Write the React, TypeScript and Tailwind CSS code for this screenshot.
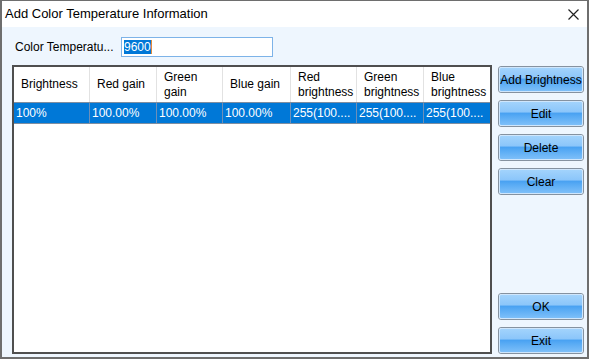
import React from 'react';

const cols = [
  { w: 'w-[76px]', head: ['Brightness'], val: '100%' },
  { w: 'w-[67px]', head: ['Red gain'], val: '100.00%' },
  { w: 'w-[66px]', head: ['Green', 'gain'], val: '100.00%' },
  { w: 'w-[68px]', head: ['Blue gain'], val: '100.00%' },
  { w: 'w-[66px]', head: ['Red', 'brightness'], val: '255(100....' },
  { w: 'w-[67px]', head: ['Green', 'brightness'], val: '255(100....' },
  { w: 'w-[66px]', head: ['Blue', 'brightness'], val: '255(100....' },
];

const Btn: React.FC<{ label: string }> = ({ label }) => (
  <button className="h-[27px] w-[86px] rounded-[3px] border border-[#8592a0] p-0 text-[12px] text-black">
    <span className="flex h-full w-full items-center justify-center rounded-[2px] border border-[#cfe6fc] bg-[linear-gradient(to_bottom,#a2d3fc_0%,#8cc6fa_42%,#4aa2f2_50%,#57aaf4_62%,#7dbff9_100%)]">
      {label}
    </span>
  </button>
);

export default function App() {
  return (
    <div className="flex h-[359px] w-[589px] flex-col border-x-2 border-t border-b-[3px] border-[#6e6e6e] font-['Liberation_Sans',Arial,sans-serif] text-black">
      {/* title bar */}
      <div className="flex h-[26px] shrink-0 items-center justify-between bg-white pl-[3px] pr-[8px]">
        <span className="text-[13px]">Add Color Temperature Information</span>
        <svg width="11" height="11" viewBox="0 0 11 11" className="mt-[1px]">
          <path d="M0.5 0.5 L10.5 10.5 M10.5 0.5 L0.5 10.5" stroke="#222" strokeWidth="1.2" />
        </svg>
      </div>

      <div className="flex flex-1 flex-col bg-[#eef6fe] pl-[10px] pr-[3px] pt-[10px] pb-[3px]">
        <div className="flex h-[20px] items-center">
          <span className="ml-[3px] w-[106px] text-[12px]">Color Temperatu...</span>
          <div className="flex h-[20px] w-[152px] items-center border border-[#7db3e8] bg-white pl-[2px] text-[12px]">
            <span className="bg-[#0078d7] leading-[14px] text-white">9600</span>
            <span className="h-[14px] w-[1px] bg-[#e08a3c]" />
          </div>
        </div>

        <div className="mt-[8px] flex flex-1 gap-[6px]">
          {/* table */}
          <div className="flex h-[289px] w-[480px] flex-col border-2 border-[#4f4f4f] bg-white">
            <div className="flex h-[35px] text-[12px] leading-[15px]">
              {cols.map((c, i) => (
                <div key={i} className={`${c.w} flex flex-col justify-center border-r border-[#e2e2e2] pl-[7px] last:border-r-0`}>
                  {c.head.map((h) => (
                    <span key={h}>{h}</span>
                  ))}
                </div>
              ))}
            </div>
            <div className="flex h-[22px] border-y border-[#7f8ea0] bg-[#0078d7] text-[12px] text-white">
              {cols.map((c, i) => (
                <div key={i} className={`${c.w} flex items-center border-r border-[#6d8fb8] pl-[2px] last:border-r-0`}>
                  {c.val}
                </div>
              ))}
            </div>
          </div>

          {/* buttons */}
          <div className="flex flex-1 flex-col justify-between pt-[1px]">
            <div className="flex flex-col gap-[7px]">
              <Btn label="Add Brightness" />
              <Btn label="Edit" />
              <Btn label="Delete" />
              <Btn label="Clear" />
            </div>
            <div className="flex flex-col gap-[7px]">
              <Btn label="OK" />
              <Btn label="Exit" />
            </div>
          </div>
        </div>
      </div>
    </div>
  );
}
